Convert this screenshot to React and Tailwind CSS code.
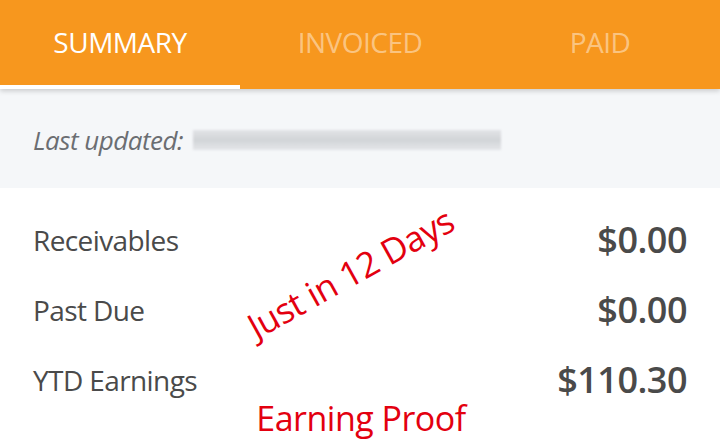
import React from 'react';

const rows = [
    { label: 'Receivables', value: '$0.00' },
    { label: 'Past Due', value: '$0.00' },
    { label: 'YTD Earnings', value: '$110.30' },
];

const tabs = ['SUMMARY', 'INVOICED', 'PAID'];

export default function App() {
    return (
        <div className="w-[720px] h-[447px] overflow-hidden bg-white relative font-['Open_Sans',sans-serif]">
            <div className="h-[89px] bg-[#f7971e] flex relative z-10 shadow-[0_2px_5px_rgba(0,0,0,0.18)]">
                {tabs.map((t, i) => (
                    <div key={t} className="flex-1 flex flex-col">
                        <div className={`flex-1 flex items-center justify-center text-[28px] tracking-[-0.5px] pb-[2px] ${i === 0 ? 'text-white' : 'text-white/45'}`}>
                            {t}
                        </div>
                        <div className={`h-[4px] ${i === 0 ? 'bg-white' : ''}`}></div>
                    </div>
                ))}
            </div>

            <div className="h-[99px] bg-[#f5f7f9] flex items-center px-[33px] pt-[3px]">
                <span className="italic text-[26px] tracking-[-0.5px] text-[#6b6e72]">Last updated:</span>
                <div className="ml-[10px] w-[308px] h-[20px] bg-gradient-to-b from-[#e2e4e7] via-[#d2d5d8] to-[#e4e6e9] blur-[1px]"></div>
            </div>

            <div className="flex flex-col pt-[17px] px-[33px]">
                {rows.map((r) => (
                    <div key={r.label} className="h-[70px] flex items-center justify-between">
                        <span className="text-[28px] tracking-[-0.6px] text-[#4a4a4a]">{r.label}</span>
                        <span className="text-[36px] font-semibold tracking-[-0.5px] text-[#4a4a4a]">{r.value}</span>
                    </div>
                ))}
            </div>

            <div className="absolute left-[236px] top-[247px] text-[35px] tracking-[-0.5px] text-[#e3000f] -rotate-[29deg] origin-center whitespace-nowrap">
                Just in 12 Days
            </div>
            <div className="absolute left-0 right-0 top-[393px] text-center pl-[2px] text-[34px] tracking-[-0.5px] text-[#e3000f]">
                Earning Proof
            </div>
        </div>
    );
}
